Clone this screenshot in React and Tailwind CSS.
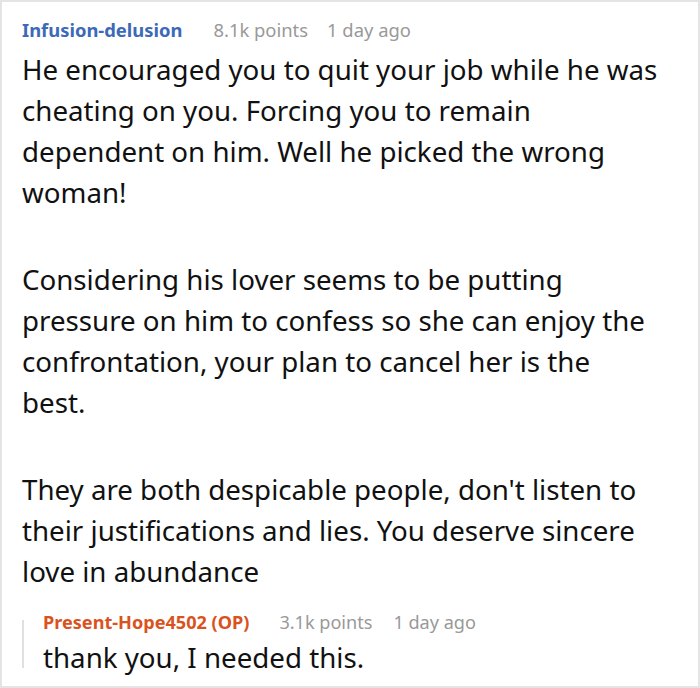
import React from 'react';

const paragraphs = [
  'He encouraged you to quit your job while he was cheating on you. Forcing you to remain dependent on him. Well he picked the wrong woman!',
  'Considering his lover seems to be putting pressure on him to confess so she can enjoy the confrontation, your plan to cancel her is the best.',
  "They are both despicable people, don't listen to their justifications and lies. You deserve sincere love in abundance",
];

const App = () => {
  return (
    <div className="w-[700px] h-[688px] bg-white border-2 border-[#e4e4e4] overflow-hidden font-['Noto_Sans',sans-serif]">
      <div className="pl-[20px] pr-[40px] pt-[13px]">
        {/* Comment header */}
        <div className="flex items-baseline text-[18.4px] leading-[30px]">
          <span className="font-bold text-[#3c69b8]">Infusion-delusion</span>
          <span className="ml-[31px] text-[#999]">8.1k points</span>
          <span className="ml-[19px] text-[#999]">1 day ago</span>
        </div>

        {/* Comment body */}
        <div className="text-[27.7px] leading-[41px] text-[#111] mt-[4px]">
          {paragraphs.map((p, i) => (
            <p key={i} className={i > 0 ? 'mt-[46px]' : ''}>{p}</p>
          ))}
        </div>

        {/* Reply */}
        <div className="flex mt-[15px]">
          <div className="w-[2px] bg-[#e0e0e0] mt-[13px] mb-[9px]" />
          <div className="pl-[19px]">
            <div className="flex items-baseline text-[18.1px] leading-[30px]">
              <span className="font-bold text-[#d9531e]">Present-Hope4502 (OP)</span>
              <span className="ml-[30px] text-[#999]">3.1k points</span>
              <span className="ml-[21px] text-[#999]">1 day ago</span>
            </div>
            <p className="text-[27.7px] leading-[40px] text-[#111]">thank you, I needed this.</p>
          </div>
        </div>
      </div>
    </div>
  );
};

export default App;
